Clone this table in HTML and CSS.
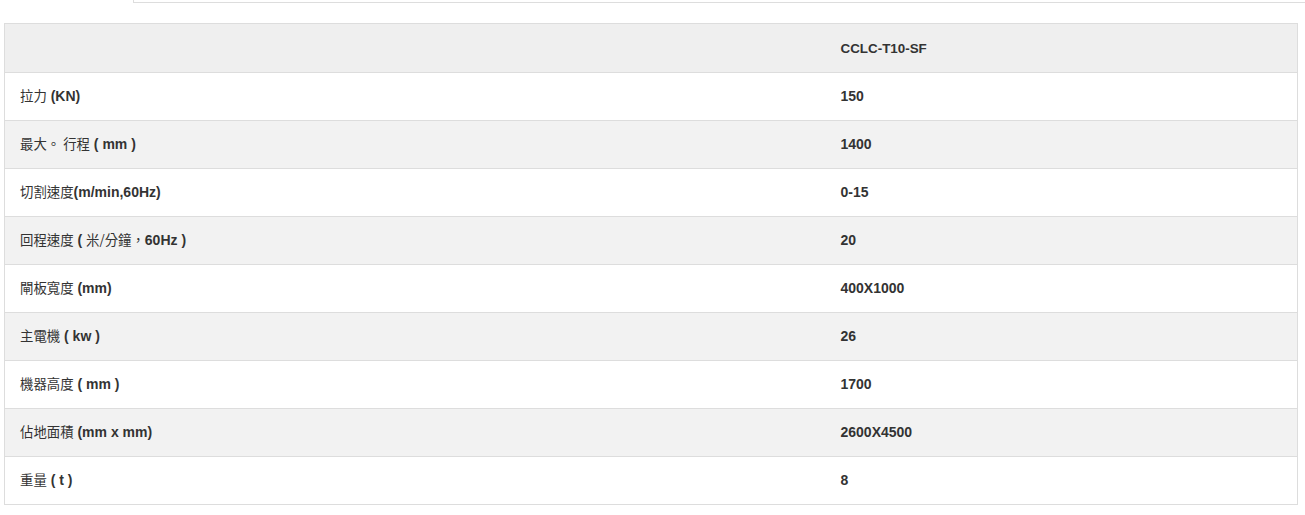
FILE: index.html
```html
<!DOCTYPE html>
<html lang="zh-Hant">
<head>
<meta charset="utf-8">
<title>CCLC-T10-SF</title>
<link rel="stylesheet" href="styles.css">
</head>
<body>
<div class="topbar"></div>
<div class="wrap">
<table class="spec">
<colgroup><col class="c1"><col class="c2"></colgroup>
<thead>
<tr><th></th><th>CCLC-T10-SF</th></tr>
</thead>
<tbody>
<tr><td><span class="cj">拉力</span> (KN)</td><td>150</td></tr>
<tr><td><span class="cj">最大。 行程</span> ( mm )</td><td>1400</td></tr>
<tr><td><span class="cj">切割速度</span>(m/min,60Hz)</td><td>0-15</td></tr>
<tr><td><span class="cj">回程速度</span> ( <span class="cj">米/分鐘，</span>60Hz )</td><td>20</td></tr>
<tr><td><span class="cj">閘板寬度</span> (mm)</td><td>400X1000</td></tr>
<tr><td><span class="cj">主電機</span> ( kw )</td><td>26</td></tr>
<tr><td><span class="cj">機器高度</span> ( mm )</td><td>1700</td></tr>
<tr><td><span class="cj">佔地面積</span> (mm x mm)</td><td>2600X4500</td></tr>
<tr><td><span class="cj">重量</span> ( t )</td><td>8</td></tr>
</tbody>
</table>
</div>
</body>
</html>
```
FILE: styles.css
```css
html, body {
  margin: 0;
  padding: 0;
  background: #fff;
}
body {
  font-family: "Liberation Sans", Arial, "Noto Sans CJK TC", sans-serif;
  font-size: 14px;
  color: #333;
}
.topbar {
  margin-left: 133px;
  height: 2px;
  border-left: 1px solid #ddd;
  border-bottom: 1px solid #ddd;
}
.wrap {
  padding: 20px 7px 0 4px;
}
.spec {
  width: 100%;
  border-collapse: collapse;
  border: 1px solid #ddd;
}
.c1 { width: 821px; }
.spec th, .spec td {
  text-align: left;
  font-weight: bold;
  line-height: 17px;
  padding: 15px 15px;
  border-top: 1px solid #ddd;
  white-space: nowrap;
}
.spec thead th {
  font-size: 13.4px;
  padding-top: 16px;
  background: #efefef;
}
.spec tbody tr:nth-child(even) td {
  background: #f2f2f2;
}
.cj {
  font-family: "Noto Sans CJK TC", sans-serif;
  font-weight: normal;
  font-size: 13.4px;
  line-height: 13px;
}
```
